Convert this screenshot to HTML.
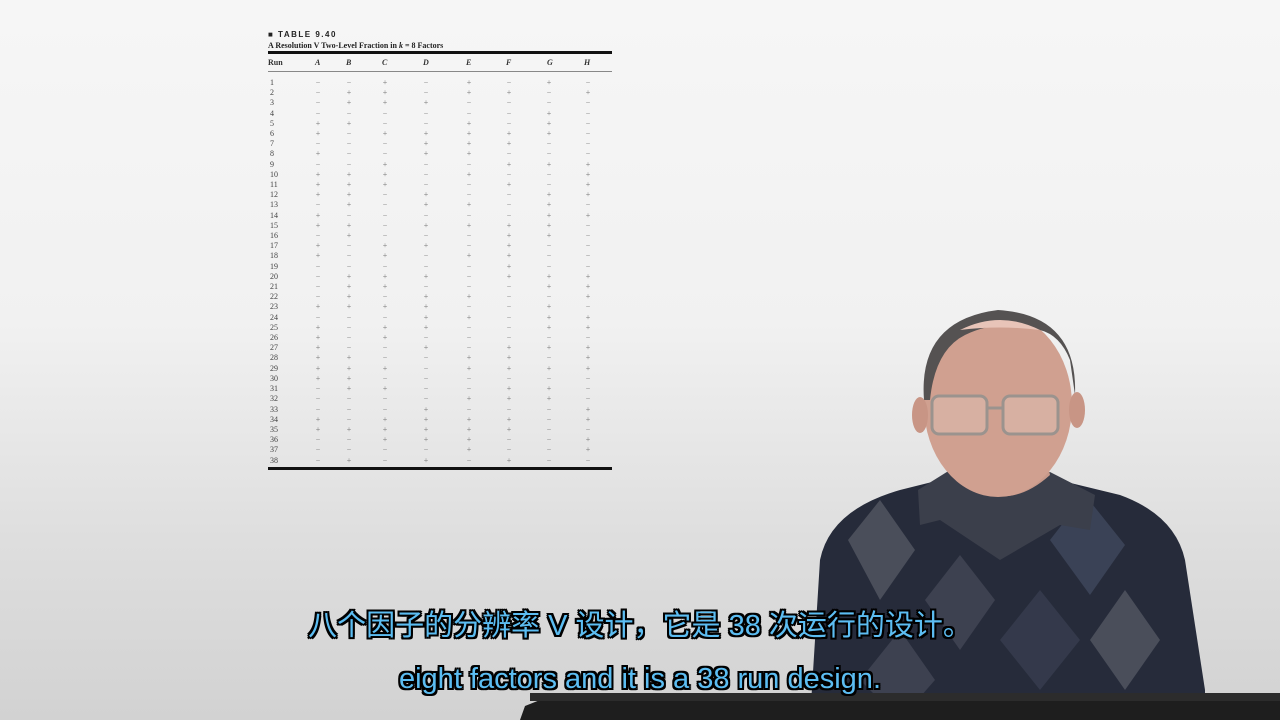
<!DOCTYPE html>
<html><head><meta charset="utf-8"><style>
html,body{margin:0;padding:0}
body{width:1280px;height:720px;overflow:hidden;position:relative;background:linear-gradient(#f6f6f6 0%,#f1f1f1 45%,#dedede 75%,#d2d2d2 100%);font-family:"Liberation Serif",serif}
.t{position:absolute}
table{position:absolute;left:268px;top:78px;border-collapse:collapse;table-layout:fixed;width:337px;font-size:8px;color:#777}
td{padding:0;height:10.2px;line-height:10.2px;text-align:center}
td:first-child{text-align:left;color:#444;padding-left:2px}
.sub{position:absolute;left:0;width:1280px;text-align:center;color:#5cbdf2;font-family:"Liberation Sans","Noto Sans CJK SC",sans-serif;text-shadow:-2px -2px 0 #000,2px -2px 0 #000,-2px 2px 0 #000,2px 2px 0 #000,0 2px 0 #000,0 -2px 0 #000,2px 0 0 #000,-2px 0 0 #000}
</style></head><body>
<div class="t" style="left:268px;top:30px;font:bold 8px 'Liberation Sans',sans-serif;letter-spacing:1.5px;color:#222">&#9632; TABLE 9.40</div>
<div class="t" style="left:268px;top:41px;font:bold 8px 'Liberation Serif',serif;color:#222">A Resolution V Two-Level Fraction in <i>k</i> = 8 Factors</div>
<div class="t" style="left:268px;top:51px;width:344px;height:3px;background:#111"></div>
<div class="t" style="left:268px;top:58px;width:344px;font:bold 8px 'Liberation Serif',serif;color:#333">
<span class="t" style="left:0">Run</span><span class="t" style="left:47px"><i>A</i></span><span class="t" style="left:78px"><i>B</i></span><span class="t" style="left:114px"><i>C</i></span><span class="t" style="left:155px"><i>D</i></span><span class="t" style="left:198px"><i>E</i></span><span class="t" style="left:238px"><i>F</i></span><span class="t" style="left:279px"><i>G</i></span><span class="t" style="left:316px"><i>H</i></span></div>
<div class="t" style="left:268px;top:71px;width:344px;height:1px;background:#888"></div>
<table>
<colgroup><col style="width:35px"><col style="width:30px"><col style="width:32px"><col style="width:40px"><col style="width:42px"><col style="width:44px"><col style="width:36px"><col style="width:44px"><col style="width:34px"></colgroup>
<tr><td>1</td><td>−</td><td>−</td><td>+</td><td>−</td><td>+</td><td>−</td><td>+</td><td>−</td></tr>
<tr><td>2</td><td>−</td><td>+</td><td>+</td><td>−</td><td>+</td><td>+</td><td>−</td><td>+</td></tr>
<tr><td>3</td><td>−</td><td>+</td><td>+</td><td>+</td><td>−</td><td>−</td><td>−</td><td>−</td></tr>
<tr><td>4</td><td>−</td><td>−</td><td>−</td><td>−</td><td>−</td><td>−</td><td>+</td><td>−</td></tr>
<tr><td>5</td><td>+</td><td>+</td><td>−</td><td>−</td><td>+</td><td>−</td><td>+</td><td>−</td></tr>
<tr><td>6</td><td>+</td><td>−</td><td>+</td><td>+</td><td>+</td><td>+</td><td>+</td><td>−</td></tr>
<tr><td>7</td><td>−</td><td>−</td><td>−</td><td>+</td><td>+</td><td>+</td><td>−</td><td>−</td></tr>
<tr><td>8</td><td>+</td><td>−</td><td>−</td><td>+</td><td>+</td><td>−</td><td>−</td><td>−</td></tr>
<tr><td>9</td><td>−</td><td>−</td><td>+</td><td>−</td><td>−</td><td>+</td><td>+</td><td>+</td></tr>
<tr><td>10</td><td>+</td><td>+</td><td>+</td><td>−</td><td>+</td><td>−</td><td>−</td><td>+</td></tr>
<tr><td>11</td><td>+</td><td>+</td><td>+</td><td>−</td><td>−</td><td>+</td><td>−</td><td>+</td></tr>
<tr><td>12</td><td>+</td><td>+</td><td>−</td><td>+</td><td>−</td><td>−</td><td>+</td><td>+</td></tr>
<tr><td>13</td><td>−</td><td>+</td><td>−</td><td>+</td><td>+</td><td>−</td><td>+</td><td>−</td></tr>
<tr><td>14</td><td>+</td><td>−</td><td>−</td><td>−</td><td>−</td><td>−</td><td>+</td><td>+</td></tr>
<tr><td>15</td><td>+</td><td>+</td><td>−</td><td>+</td><td>+</td><td>+</td><td>+</td><td>−</td></tr>
<tr><td>16</td><td>−</td><td>+</td><td>−</td><td>−</td><td>−</td><td>+</td><td>+</td><td>−</td></tr>
<tr><td>17</td><td>+</td><td>−</td><td>+</td><td>+</td><td>−</td><td>+</td><td>−</td><td>−</td></tr>
<tr><td>18</td><td>+</td><td>−</td><td>+</td><td>−</td><td>+</td><td>+</td><td>−</td><td>−</td></tr>
<tr><td>19</td><td>−</td><td>−</td><td>−</td><td>−</td><td>−</td><td>+</td><td>−</td><td>−</td></tr>
<tr><td>20</td><td>−</td><td>+</td><td>+</td><td>+</td><td>−</td><td>+</td><td>+</td><td>+</td></tr>
<tr><td>21</td><td>−</td><td>+</td><td>+</td><td>−</td><td>−</td><td>−</td><td>+</td><td>+</td></tr>
<tr><td>22</td><td>−</td><td>+</td><td>−</td><td>+</td><td>+</td><td>−</td><td>−</td><td>+</td></tr>
<tr><td>23</td><td>+</td><td>+</td><td>+</td><td>+</td><td>−</td><td>−</td><td>+</td><td>−</td></tr>
<tr><td>24</td><td>−</td><td>−</td><td>−</td><td>+</td><td>+</td><td>−</td><td>+</td><td>+</td></tr>
<tr><td>25</td><td>+</td><td>−</td><td>+</td><td>+</td><td>−</td><td>−</td><td>+</td><td>+</td></tr>
<tr><td>26</td><td>+</td><td>−</td><td>+</td><td>−</td><td>−</td><td>−</td><td>−</td><td>−</td></tr>
<tr><td>27</td><td>+</td><td>−</td><td>−</td><td>+</td><td>−</td><td>+</td><td>+</td><td>+</td></tr>
<tr><td>28</td><td>+</td><td>+</td><td>−</td><td>−</td><td>+</td><td>+</td><td>−</td><td>+</td></tr>
<tr><td>29</td><td>+</td><td>+</td><td>+</td><td>−</td><td>+</td><td>+</td><td>+</td><td>+</td></tr>
<tr><td>30</td><td>+</td><td>+</td><td>−</td><td>−</td><td>−</td><td>−</td><td>−</td><td>−</td></tr>
<tr><td>31</td><td>−</td><td>+</td><td>+</td><td>−</td><td>−</td><td>+</td><td>+</td><td>−</td></tr>
<tr><td>32</td><td>−</td><td>−</td><td>−</td><td>−</td><td>+</td><td>+</td><td>+</td><td>−</td></tr>
<tr><td>33</td><td>−</td><td>−</td><td>−</td><td>+</td><td>−</td><td>−</td><td>−</td><td>+</td></tr>
<tr><td>34</td><td>+</td><td>−</td><td>+</td><td>+</td><td>+</td><td>+</td><td>−</td><td>+</td></tr>
<tr><td>35</td><td>+</td><td>+</td><td>+</td><td>+</td><td>+</td><td>+</td><td>−</td><td>−</td></tr>
<tr><td>36</td><td>−</td><td>−</td><td>+</td><td>+</td><td>+</td><td>−</td><td>−</td><td>+</td></tr>
<tr><td>37</td><td>−</td><td>−</td><td>−</td><td>−</td><td>+</td><td>−</td><td>−</td><td>+</td></tr>
<tr><td>38</td><td>−</td><td>+</td><td>−</td><td>+</td><td>−</td><td>+</td><td>−</td><td>−</td></tr>
</table>
<div class="t" style="left:268px;top:467px;width:344px;height:3px;background:#111"></div>

<svg class="t" style="left:0;top:0" width="1280" height="720">
<path d="M810 720 L820 560 Q830 510 900 490 L960 475 L1050 478 L1120 495 Q1175 515 1185 560 L1205 690 L1205 720 Z" fill="#262b3a"/>
<path d="M848 540 L880 500 L915 550 L880 600 Z" fill="#4a4e5a"/>
<path d="M1050 540 L1085 495 L1125 545 L1090 595 Z" fill="#3a4256"/>
<path d="M925 600 L960 555 L995 600 L960 650 Z" fill="#3d4150"/>
<path d="M1090 640 L1125 590 L1160 640 L1125 690 Z" fill="#4a4e5a"/>
<path d="M1000 640 L1040 590 L1080 640 L1040 690 Z" fill="#34394b"/>
<path d="M860 680 L900 630 L935 680 L900 720 Z" fill="#3d4150"/>
<path d="M918 490 L950 470 L1050 472 L1095 495 L1090 530 L1060 525 L1000 560 L940 520 L920 525 Z" fill="#3b3f4b"/>
<path d="M950 470 Q1000 520 1050 475 L1045 450 L955 450 Z" fill="#c7998a"/>
<ellipse cx="998" cy="405" rx="74" ry="92" fill="#d0a090"/>
<path d="M924 400 Q918 320 998 310 Q1078 315 1075 395 L1070 360 Q1060 335 1040 330 Q1000 318 965 335 Q935 350 930 400 Z" fill="#555252"/>
<path d="M960 330 Q1000 310 1040 330 Q1000 325 960 330Z" fill="#e8c4b8"/>
<ellipse cx="920" cy="415" rx="8" ry="18" fill="#c89585"/>
<ellipse cx="1077" cy="410" rx="8" ry="18" fill="#c89585"/>
<rect x="932" y="396" width="55" height="38" rx="7" fill="#e6cfc6" fill-opacity=".35" stroke="#9b938e" stroke-width="3"/>
<rect x="1003" y="396" width="55" height="38" rx="7" fill="#e6cfc6" fill-opacity=".35" stroke="#9b938e" stroke-width="3"/>
<path d="M987 408 L1003 408" stroke="#9b938e" stroke-width="3"/>
<path d="M520 720 L525 706 L540 700 L1280 700 L1280 720 Z" fill="#1e1e1e"/>
<rect x="530" y="693" width="750" height="8" fill="#2c2c2c"/>
</svg>

<div class="sub" style="top:606px;font-size:29px;line-height:40px">八个因子的分辨率 V 设计，它是 38 次运行的设计。</div>
<div class="sub" style="top:659px;font-size:29px;line-height:40px">eight factors and it is a 38 run design.</div>
</body></html>
